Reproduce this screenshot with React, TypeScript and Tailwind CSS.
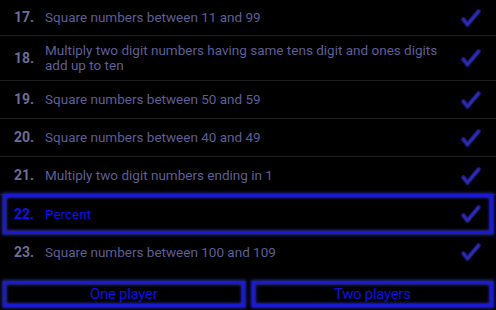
const rows = [
  { n: 17, text: 'Square numbers between 11 and 99', h: 'h-[36px]' },
  { n: 18, text: 'Multiply two digit numbers having same tens digit and ones digits add up to ten', h: 'h-[45px]' },
  { n: 19, text: 'Square numbers between 50 and 59', h: 'h-[38px]' },
  { n: 20, text: 'Square numbers between 40 and 49', h: 'h-[38px]' },
  { n: 21, text: 'Multiply two digit numbers ending in 1', h: 'h-[38px]' },
  { n: 22, text: 'Percent', h: 'h-[38px]', selected: true },
  { n: 23, text: 'Square numbers between 100 and 109', h: 'h-[38px]', last: true },
];

function Check() {
  return (
    <svg width="20" height="18" viewBox="0 0 20 18" className="shrink-0">
      <path
        d="M2.5 10.5 L6.5 15.5 L17.5 2.5"
        fill="none"
        stroke="#1c1c8c"
        strokeWidth="4.5"
        strokeLinecap="round"
        strokeLinejoin="round"
      />
      <path
        d="M2.5 10.5 L6.5 15.5 L17.5 2.5"
        fill="none"
        stroke="#2e2eb4"
        strokeWidth="2"
        strokeLinecap="round"
        strokeLinejoin="round"
      />
    </svg>
  );
}

export default function App() {
  return (
    <div className="h-[310px] w-[496px] overflow-hidden bg-black font-['Roboto',sans-serif]">
      <div className="flex flex-col">
        {rows.map(r => (
          <div
            key={r.n}
            className={`relative flex items-center pl-[14px] pr-[15px] ${r.h} ${
              r.last || r.selected ? '' : 'border-b border-[#1e1e1e]'
            }`}
          >
            {r.selected && (
              <div className="pointer-events-none absolute inset-x-[3px] inset-y-[-1px] border-[3px] border-[#1a1ad0] shadow-[0_0_3px_1px_#2a2a98,inset_0_0_3px_1px_#2a2a98]" />
            )}
            <span
              className={`w-[31px] shrink-0 text-[14px] font-bold ${
                r.selected ? 'text-[#1010f0]' : 'text-[#6c6c98]'
              }`}
            >
              {r.n}.
            </span>
            <span
              className={`flex-1 text-[13.5px] leading-[15px] ${
                r.selected ? 'text-[#1010f0]' : 'text-[#5e5e98]'
              }`}
            >
              {r.text}
            </span>
            <Check />
          </div>
        ))}
      </div>
      <div className="mt-[10px] flex gap-[7px] px-[3px]">
        <button className="h-[26px] flex-1 border-[3px] border-[#1a1ad0] text-[15px] leading-none tracking-[-0.3px] text-[#1010e0] shadow-[0_0_3px_1px_#2a2a98,inset_0_0_3px_1px_#2a2a98]">
          One player
        </button>
        <button className="h-[26px] flex-1 border-[3px] border-[#1a1ad0] text-[15px] leading-none tracking-[-0.3px] text-[#1010e0] shadow-[0_0_3px_1px_#2a2a98,inset_0_0_3px_1px_#2a2a98]">
          Two players
        </button>
      </div>
    </div>
  );
}
